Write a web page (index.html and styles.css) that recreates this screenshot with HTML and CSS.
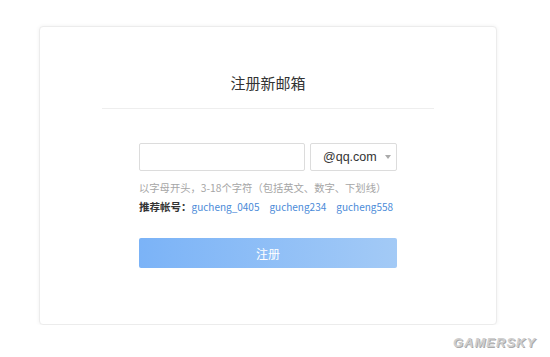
FILE: index.html
```html
<!DOCTYPE html>
<html lang="zh-CN">
<head>
    <meta charset="UTF-8">
    <meta name="viewport" content="width=device-width, initial-scale=1.0">
    <title>注册新邮箱</title>
    <link rel="stylesheet" href="styles.css">
</head>
<body>

<div class="card">
    <div class="card-header">
        <h1 class="title">注册新邮箱</h1>
    </div>

    <form class="reg-form">
        <div class="field-row">
            <input class="name-input" type="text">
            <div class="domain-select">
                <span class="domain-text">@qq.com</span>
                <span class="arrow"></span>
            </div>
        </div>
        <p class="hint">以字母开头，3-18个字符（包括英文、数字、下划线）</p>
        <p class="suggest">
            <span class="suggest-label">推荐帐号：</span>
            <a href="#">gucheng_0405</a>
            <a href="#">gucheng234</a>
            <a href="#">gucheng558</a>
        </p>
        <button class="submit-btn" type="button">注册</button>
    </form>
</div>

<div class="watermark">GAMERSKY</div>

</body>
</html>
```

FILE: styles.css
```css
body {
    margin: 0;
    padding: 0;
    background-color: #fff;
    font-family: "Noto Sans CJK SC", "Noto Sans", sans-serif;
    color: #333;
}

.card {
    box-sizing: border-box;
    width: 458px;
    height: 299px;
    margin: 26px 0 0 39px;
    padding-top: 46px;
    border: 1px solid #ececec;
    border-radius: 4px;
    box-shadow: 0 0 4px rgba(0, 0, 0, 0.06);
    background-color: #fff;
}

.card-header {
    width: 332px;
    margin: 0 auto;
    padding-bottom: 15px;
    border-bottom: 1px solid #eeeeee;
    text-align: center;
}

.title {
    margin: 0;
    font-size: 15px;
    line-height: 20px;
    font-weight: normal;
    color: #333;
}

.reg-form {
    width: 258px;
    margin: 34px auto 0;
}

.field-row {
    display: flex;
    gap: 5px;
    height: 28px;
}

.name-input {
    box-sizing: border-box;
    width: 166px;
    height: 28px;
    margin: 0;
    border: 1px solid #dcdcdc;
    border-radius: 2px;
    outline: none;
}

.domain-select {
    box-sizing: border-box;
    flex: 1;
    display: flex;
    align-items: center;
    padding-left: 12px;
    border: 1px solid #dcdcdc;
    border-radius: 2px;
}

.domain-text {
    font-family: "Liberation Sans", Arial, sans-serif;
    font-size: 12.5px;
    color: #333;
}

.arrow {
    width: 0;
    height: 0;
    margin-left: 8px;
    border-left: 3px solid transparent;
    border-right: 3px solid transparent;
    border-top: 4px solid #aaa;
}

.hint {
    margin: 9px 0 0;
    font-size: 10.3px;
    line-height: 16px;
    color: #a6a6a6;
    white-space: nowrap;
}

.suggest {
    display: flex;
    align-items: center;
    margin: 3px 0 0;
    font-size: 10.5px;
    line-height: 16px;
    white-space: nowrap;
}

.suggest-label {
    flex-shrink: 0;
    color: #333;
    font-weight: bold;
}

.suggest a {
    margin-right: 10px;
    font-size: 10px;
    color: #4a8ad8;
    text-decoration: none;
}

.submit-btn {
    display: block;
    width: 258px;
    height: 30px;
    margin-top: 23px;
    padding: 0;
    border: none;
    border-radius: 2px;
    background: linear-gradient(to right, #7bb3f7, #a3caf6);
    font-family: "Noto Sans CJK SC", sans-serif;
    font-size: 12px;
    color: #fff;
}

.watermark {
    position: absolute;
    left: 453px;
    top: 335px;
    font-family: "Liberation Sans", Arial, sans-serif;
    font-size: 13px;
    font-weight: bold;
    font-style: italic;
    letter-spacing: 1px;
    color: #cfcfcf;
    text-shadow: 1px 1px 0 #aaa, -1px -1px 0 #fff;
}
```
